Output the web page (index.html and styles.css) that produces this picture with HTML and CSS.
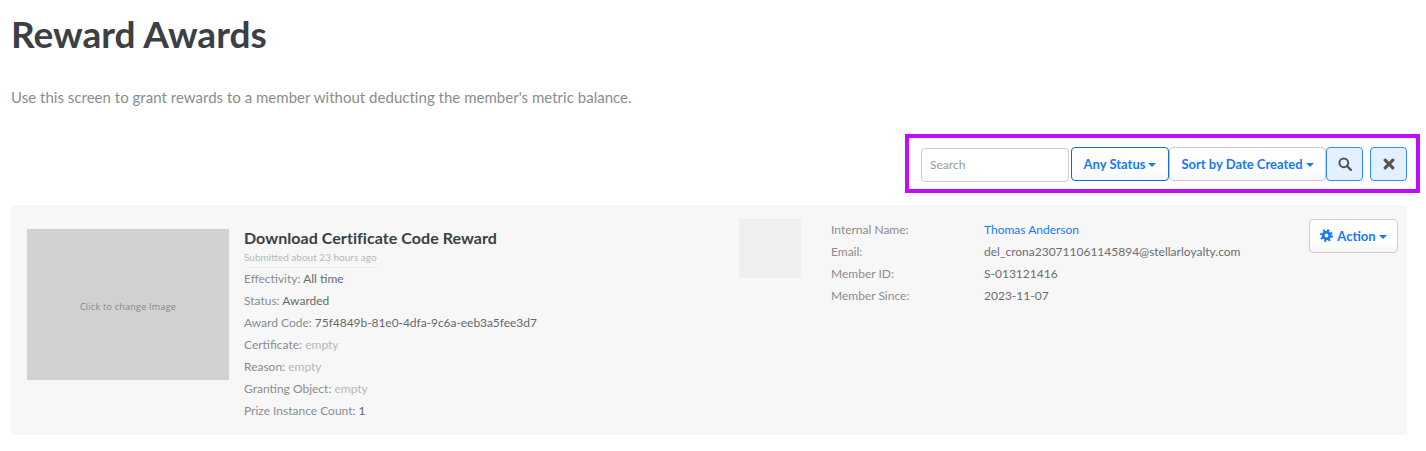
FILE: index.html
```html
<!DOCTYPE html>
<html lang="en">
<head>
    <meta charset="UTF-8">
    <title>Reward Awards</title>
    <link rel="stylesheet" href="styles.css">
</head>
<body>
    <div class="page">
        <h1>Reward Awards</h1>
        <p class="intro">Use this screen to grant rewards to a member without deducting the member's metric balance.</p>

        <div class="toolbar-row">
            <div class="toolbar">
                <input class="search" type="text" placeholder="Search">
                <div class="btn-group">
                    <button class="btn btn-active">Any Status<span class="caret"></span></button>
                    <button class="btn btn-sort">Sort by Date Created<span class="caret"></span></button>
                    <button class="btn btn-icon" aria-label="Search">
                        <svg width="14" height="14" viewBox="0 0 14 14">
                            <circle cx="5.8" cy="5.8" r="4.4" fill="none" stroke="#555" stroke-width="2"/>
                            <line x1="9" y1="9" x2="12.8" y2="12.8" stroke="#555" stroke-width="2.4" stroke-linecap="round"/>
                        </svg>
                    </button>
                </div>
                <button class="btn btn-icon btn-clear" aria-label="Clear">
                    <svg width="12" height="12" viewBox="0 0 12 12">
                        <path d="M2.2 2.2 L9.8 9.8 M9.8 2.2 L2.2 9.8" stroke="#555" stroke-width="3.2" stroke-linecap="round" fill="none"/>
                    </svg>
                </button>
            </div>
        </div>

        <div class="card">
            <div class="reward-image">Click to change Image</div>
            <div class="details">
                <h2>Download Certificate Code Reward</h2>
                <div class="submitted">Submitted about 23 hours ago</div>
                <div class="line">Effectivity: <span class="dark">All time</span></div>
                <div class="line">Status: <span class="dark">Awarded</span></div>
                <div class="line">Award Code: <span class="dark code">75f4849b-81e0-4dfa-9c6a-eeb3a5fee3d7</span></div>
                <div class="line">Certificate: <span class="empty">empty</span></div>
                <div class="line">Reason: <span class="empty">empty</span></div>
                <div class="line">Granting Object: <span class="empty">empty</span></div>
                <div class="line">Prize Instance Count: <span class="dark">1</span></div>
            </div>
            <div class="avatar"></div>
            <div class="member">
                <span class="label">Internal Name:</span><a class="value link" href="#">Thomas Anderson</a>
                <span class="label">Email:</span><span class="value">del_crona230711061145894@stellarloyalty.com</span>
                <span class="label">Member ID:</span><span class="value">S-013121416</span>
                <span class="label">Member Since:</span><span class="value">2023-11-07</span>
            </div>
            <button class="btn btn-action">
                <svg width="13" height="13" viewBox="0 0 14 14">
                    <circle cx="7" cy="7" r="3.6" fill="none" stroke="#1677ff" stroke-width="3"/>
                    <circle cx="7" cy="7" r="5.6" fill="none" stroke="#1677ff" stroke-width="2.6" stroke-dasharray="2.2 2.2"/>
                </svg>
                <span>Action<span class="caret"></span></span>
            </button>
        </div>
    </div>
</body>
</html>
```

FILE: styles.css
```css
body {
    margin: 0;
    background-color: white;
    font-family: Lato, 'Open Sans', sans-serif;
    font-size: 12px;
    color: #8a8d8f;
}

.page {
    padding: 0 19px 0 11px;
}

h1 {
    margin: 0;
    padding-top: 13px;
    font-size: 37px;
    line-height: 41px;
    font-weight: 700;
    color: #3a4043;
}

.intro {
    margin: 0;
    padding-top: 33px;
    font-size: 15px;
    line-height: 20px;
    letter-spacing: 0.02px;
    color: #8a8d8f;
}

.toolbar-row {
    display: flex;
    justify-content: flex-end;
    margin-top: 27px;
}

.toolbar {
    display: flex;
    align-items: flex-start;
    margin-right: -13px;
    padding: 9px 9px 7px 12px;
    border: 4px solid #c10bff;
}

.search {
    box-sizing: border-box;
    width: 148px;
    height: 34px;
    margin: 1px 2px 0 0;
    padding: 0 8px 2px;
    border: 1px solid #ccc;
    border-radius: 4px;
    outline: none;
    font-family: Lato, sans-serif;
    font-size: 12px;
}

.search::placeholder {
    color: #999;
}

.btn-group {
    display: flex;
}

.btn {
    box-sizing: border-box;
    height: 34px;
    padding: 0 0 1px;
    border: 1px solid #ccc;
    border-radius: 4px;
    background: linear-gradient(#fff 70%, #f6f6f6);
    font-family: Lato, sans-serif;
    font-size: 13px;
    font-weight: 700;
    color: #1677ff;
    white-space: nowrap;
}

.btn-active {
    width: 98px;
    border-color: #0d6ae0;
}

.btn-sort {
    width: 157px;
}

.btn-icon {
    display: flex;
    align-items: center;
    justify-content: center;
    width: 37px;
    padding: 0;
    border-color: #2f8bff;
    background: #e3f0ff;
}

.btn-clear {
    margin-left: 7px;
}

.caret {
    display: inline-block;
    margin-left: 3px;
    vertical-align: middle;
    border-top: 4px solid;
    border-left: 4px solid transparent;
    border-right: 4px solid transparent;
}

.card {
    display: flex;
    align-items: flex-start;
    height: 230px;
    margin-top: 12px;
    padding-left: 16px;
    border-radius: 3px;
    background-color: #f7f7f7;
}

.reward-image {
    display: flex;
    align-items: center;
    justify-content: center;
    flex: none;
    box-sizing: border-box;
    width: 202px;
    height: 151px;
    margin-top: 24px;
    padding-top: 3px;
    background-color: #d1d1d1;
    font-family: 'Open Sans', sans-serif;
    font-size: 9px;
    letter-spacing: 0.25px;
    color: #888;
}

.details {
    flex: none;
    width: 495px;
    margin-left: 15px;
    padding-top: 23px;
}

h2 {
    margin: 0;
    font-size: 16px;
    line-height: 19px;
    font-weight: 700;
    letter-spacing: 0.06px;
    color: #3a4043;
}

.submitted {
    width: 134px;
    margin-top: 4px;
    padding-bottom: 3px;
    border-bottom: 1px solid #eee;
    font-size: 10px;
    line-height: 13px;
    white-space: nowrap;
    color: #b5b8b9;
}

.line {
    line-height: 22px;
}

.dark {
    color: #666a6c;
}

.code {
    letter-spacing: -0.05px;
}

.empty {
    color: #b5b8b9;
}

.avatar {
    flex: none;
    width: 62px;
    height: 59px;
    margin-top: 14px;
    background-color: #efefef;
}

.member {
    display: grid;
    grid-template-columns: 153px auto;
    margin: 14px 0 0 30px;
    line-height: 22px;
}

.value {
    color: #6a6e70;
}

.link {
    color: #1677ff;
    text-decoration: none;
}

.btn-action {
    display: flex;
    align-items: center;
    justify-content: center;
    gap: 4px;
    width: 89px;
    margin: 14px 9px 0 auto;
}
```
